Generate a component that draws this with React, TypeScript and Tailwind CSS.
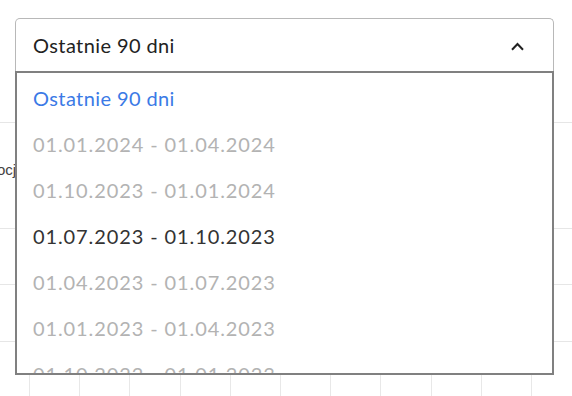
import React from "react";

// ── Data ───────────────────────────────────────────────────────────────────
type Option = { label: string; state: "selected" | "disabled" | "normal" };

const options: Option[] = [
  { label: "Ostatnie 90 dni", state: "selected" },
  { label: "01.01.2024 - 01.04.2024", state: "disabled" },
  { label: "01.10.2023 - 01.01.2024", state: "disabled" },
  { label: "01.07.2023 - 01.10.2023", state: "normal" },
  { label: "01.04.2023 - 01.07.2023", state: "disabled" },
  { label: "01.01.2023 - 01.04.2023", state: "disabled" },
  { label: "01.10.2022 - 01.01.2023", state: "disabled" },
];

const colorFor = {
  selected: "text-[#3b7ae6] tracking-[0.4px]",
  disabled: "text-[#b3b3b3] tracking-[0.9px]",
  normal: "text-[#333333] tracking-[0.9px]",
};

// ── Component ──────────────────────────────────────────────────────────────
export default function App() {
  return (
    <div className="relative w-[572px] h-[396px] overflow-hidden bg-white font-['Lato','Open_Sans',sans-serif]">
      {/* ── Chart behind ── */}
      <div className="flex flex-col pt-[122px] h-full">
        <div className="h-px bg-[#e6e6e6]" />
        <div className="h-[105px] flex items-center">
          <span className="-ml-[3px] mt-[-10px] text-[15px] text-[#444] font-['Liberation_Sans',sans-serif]">ocje</span>
        </div>
        <div className="h-px bg-[#e6e6e6]" />
        <div className="h-[55px]" />
        <div className="h-px bg-[#e6e6e6]" />
        <div className="h-[56px]" />
        <div className="h-px bg-[#e6e6e6]" />
        <div className="flex-1 ml-[29px] w-[503px] flex justify-between">
          {Array.from({ length: 11 }).map((_, i) => (
            <div key={i} className="w-px h-full bg-[#e8e8e8]" />
          ))}
        </div>
      </div>

      {/* ── Open select ── */}
      <div className="absolute left-[15px] top-[18px] w-[539px]">
        <div className="h-[53px] flex items-center justify-between pl-[17px] pr-[29px] border-t border-x border-[#b8b8b8] rounded-t-[5px] bg-white">
          <span className="text-[20px] tracking-[0.4px] text-[#222]">Ostatnie 90 dni</span>
          <svg width="13" height="9" viewBox="0 0 13 9" fill="none" className="mt-[2px]">
            <polyline points="1,7.8 6.5,2 12,7.8" stroke="#222" strokeWidth="2" />
          </svg>
        </div>
        <div className="h-[304px] border-2 border-[#808080] bg-white overflow-hidden pt-[2px]">
          {options.map((o) => (
            <div key={o.label} className={`h-[46px] flex items-center pl-[16px] text-[20px] ${colorFor[o.state]}`}>
              {o.label}
            </div>
          ))}
        </div>
      </div>
    </div>
  );
}
